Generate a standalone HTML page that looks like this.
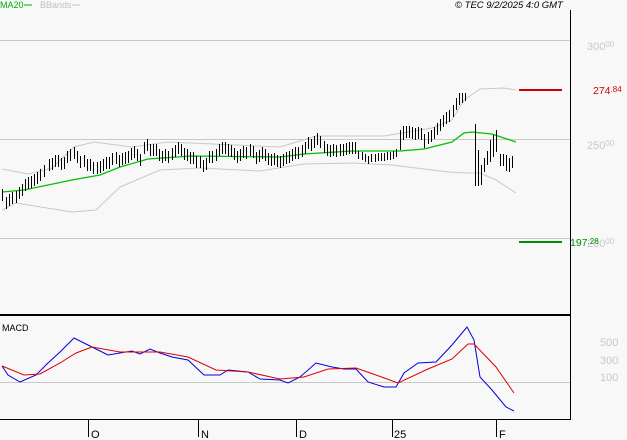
<!DOCTYPE html><html><head><meta charset="utf-8"><style>
html,body{margin:0;padding:0;background:#f8f8f8;width:627px;height:440px;overflow:hidden}
svg{display:block;font-family:"Liberation Sans",sans-serif}
</style></head><body>
<svg width="627" height="440" viewBox="0 0 627 440">
<rect width="627" height="440" fill="#f8f8f8"/>
<g stroke="#c8c8c8" stroke-width="1"><line x1="0" y1="40.5" x2="570" y2="40.5"/><line x1="0" y1="139.5" x2="570" y2="139.5"/><line x1="0" y1="238.5" x2="570" y2="238.5"/><line x1="0" y1="382.5" x2="570" y2="382.5"/></g>
<g font-size="11" fill="#c8c8c8"><text x="587" y="50">300<tspan font-size="8" dy="-3">00</tspan></text><text x="587" y="149">250<tspan font-size="8" dy="-3">00</tspan></text><text x="587" y="247">200<tspan font-size="8" dy="-3">00</tspan></text>
<text x="600" y="346">500</text><text x="600" y="364">300</text><text x="600" y="381">100</text></g>
<line x1="570.5" y1="10" x2="570.5" y2="419" stroke="#000"/>
<line x1="0" y1="315" x2="570" y2="315" stroke="#000" stroke-width="2"/>
<line x1="0" y1="419.5" x2="571" y2="419.5" stroke="#000"/>
<g stroke="#000"><line x1="88.5" y1="419" x2="88.5" y2="437"/><line x1="198.5" y1="419" x2="198.5" y2="437"/><line x1="296.5" y1="419" x2="296.5" y2="437"/><line x1="392.5" y1="419" x2="392.5" y2="437"/><line x1="496.5" y1="419" x2="496.5" y2="437"/></g>
<g font-size="11" fill="#000"><text x="91" y="438">O</text><text x="201" y="438">N</text><text x="299" y="438">D</text><text x="394" y="438">25</text><text x="499" y="438">F</text></g>
<text x="2" y="331" font-size="9" fill="#000">MACD</text>
<text x="0" y="8" font-size="9" fill="#00b000">MA20</text><line x1="24" y1="5" x2="32" y2="5" stroke="#00b000"/>
<text x="40" y="8" font-size="9" fill="#c0c0c0">BBands</text><line x1="72" y1="5" x2="80" y2="5" stroke="#c0c0c0"/>
<text x="455" y="8" font-size="9.5" font-style="italic" fill="#000">© TEC 9/2/2025 4:0 GMT</text>
<polyline fill="none" stroke="#c8c8c8" points="2,169 28,174 52,168 74,147 94,142 132,147 168,142 280,147 316,136 384,136 432,128 452,120 464,100 480,89 504,88 516,90"/>
<polyline fill="none" stroke="#c8c8c8" points="2,210 16,203 72,212 96,210 120,187 160,170 200,168 260,171 304,164 352,163 392,165 448,172 468,173 480,173 496,180 516,193"/>
<polyline fill="none" stroke="#00c000" stroke-width="1.3" points="2,192 24,190 48,185 72,180 100,175 120,167 148,159 192,156 280,157 304,154 352,151 400,151 424,149 452,142 464,133 472,132 492,134 516,142"/>
<path transform="translate(0.5,0)" shape-rendering="crispEdges" fill="none" stroke="#000" stroke-width="1" d="M2 189v12M6 197v12M9 194v12M12 192v12M16 191v12M19 187v12M22 184v12M25 179v12M28 177v12M31 176v12M34 174v12M37 172v12M40 169v12M44 165v12M49 159v12M52 158v12M55 155v12M58 155v12M61 158v12M64 157v12M67 151v12M70 149v12M74 147v12M77 151v12M80 156v12M84 155v12M87 159v12M90 159v12M93 162v12M97 162v12M100 161v12M103 159v12M106 157v12M109 157v12M112 153v12M116 152v12M119 155v12M122 153v12M125 152v12M128 151v12M131 148v12M134 146v12M137 149v12M140 154v12M144 142v12M147 139v12M150 144v12M153 144v12M156 144v12M159 149v12M162 151v12M165 149v12M168 151v12M172 148v12M175 145v12M178 142v12M181 144v12M184 148v12M187 149v12M190 152v12M193 152v12M196 156v12M200 156v12M203 160v12M206 158v12M209 151v12M212 151v12M216 149v12M219 144v12M222 142v12M225 142v12M228 144v12M231 145v12M234 148v12M237 151v12M240 149v12M243 146v12M246 147v12M250 144v12M253 146v12M256 152v12M259 150v12M262 147v12M265 149v12M268 153v12M271 154v12M274 153v12M277 155v12M280 156v12M283 154v12M286 152v12M289 151v12M292 149v12M295 147v12M298 147v12M302 145v12M305 142v12M308 137v12M311 139v12M314 136v12M317 133v12M320 136v12M324 141v12M327 144v12M330 145v12M333 144v12M336 145v12M340 144v12M343 144v12M346 143v12M349 142v12M352 142v12M355 142v12M358 151v8M362 152v8M365 154v8M368 156v8M371 154v8M375 154v8M378 153v8M381 153v8M384 153v8M387 152v8M390 152v8M393 151v8M396 149v8M400 130v20M403 126v14M406 126v12M409 126v12M412 127v12M415 128v12M418 127v12M421 128v12M424 134v14M428 132v12M431 130v12M434 127v12M437 123v12M440 119v12M443 115v12M446 112v12M449 110v12M453 105v12M456 98v12M459 93v12M462 93v10M465 93v8M475 124v62M478 150v36M481 165v20M484 158v14M487 151v14M490 140v22M493 135v22M496 130v22M500 154v12M503 154v12M506 155v16M509 158v14M512 156v12"/>
<line x1="519" y1="90" x2="562" y2="90" stroke="#cc0000" stroke-width="2"/>
<line x1="519" y1="242" x2="562" y2="242" stroke="#009000" stroke-width="2"/>
<text x="593" y="94" font-size="10.5" fill="#cc0000">274<tspan font-size="8" dy="-2">.84</tspan></text>
<text x="570" y="246" font-size="10.5" fill="#009000">197<tspan font-size="8" dy="-2">.28</tspan></text>
<polyline fill="none" stroke="#0000dd" stroke-width="1" points="2,366 8,375 20,382 36,375 48,363 60,352 74,338 88,345 108,355 132,351 140,354 150,349 160,353 172,357 188,360 204,375 220,375 228,370 248,372 260,379 280,380 288,383 300,377 316,363 332,367 344,369 356,369 368,382 384,387 396,387 404,373 418,363 436,362 452,345 467,327 474,340 480,377 492,390 506,407 514,411"/>
<polyline fill="none" stroke="#dd0000" stroke-width="1" points="2,366 24,375 40,374 60,363 76,353 92,347 120,352 160,352 188,357 216,370 248,372 280,379 304,377 328,369 356,368 376,375 398,383 428,369 452,359 468,344 474,344 496,367 514,393"/>
</svg>
</body></html>
